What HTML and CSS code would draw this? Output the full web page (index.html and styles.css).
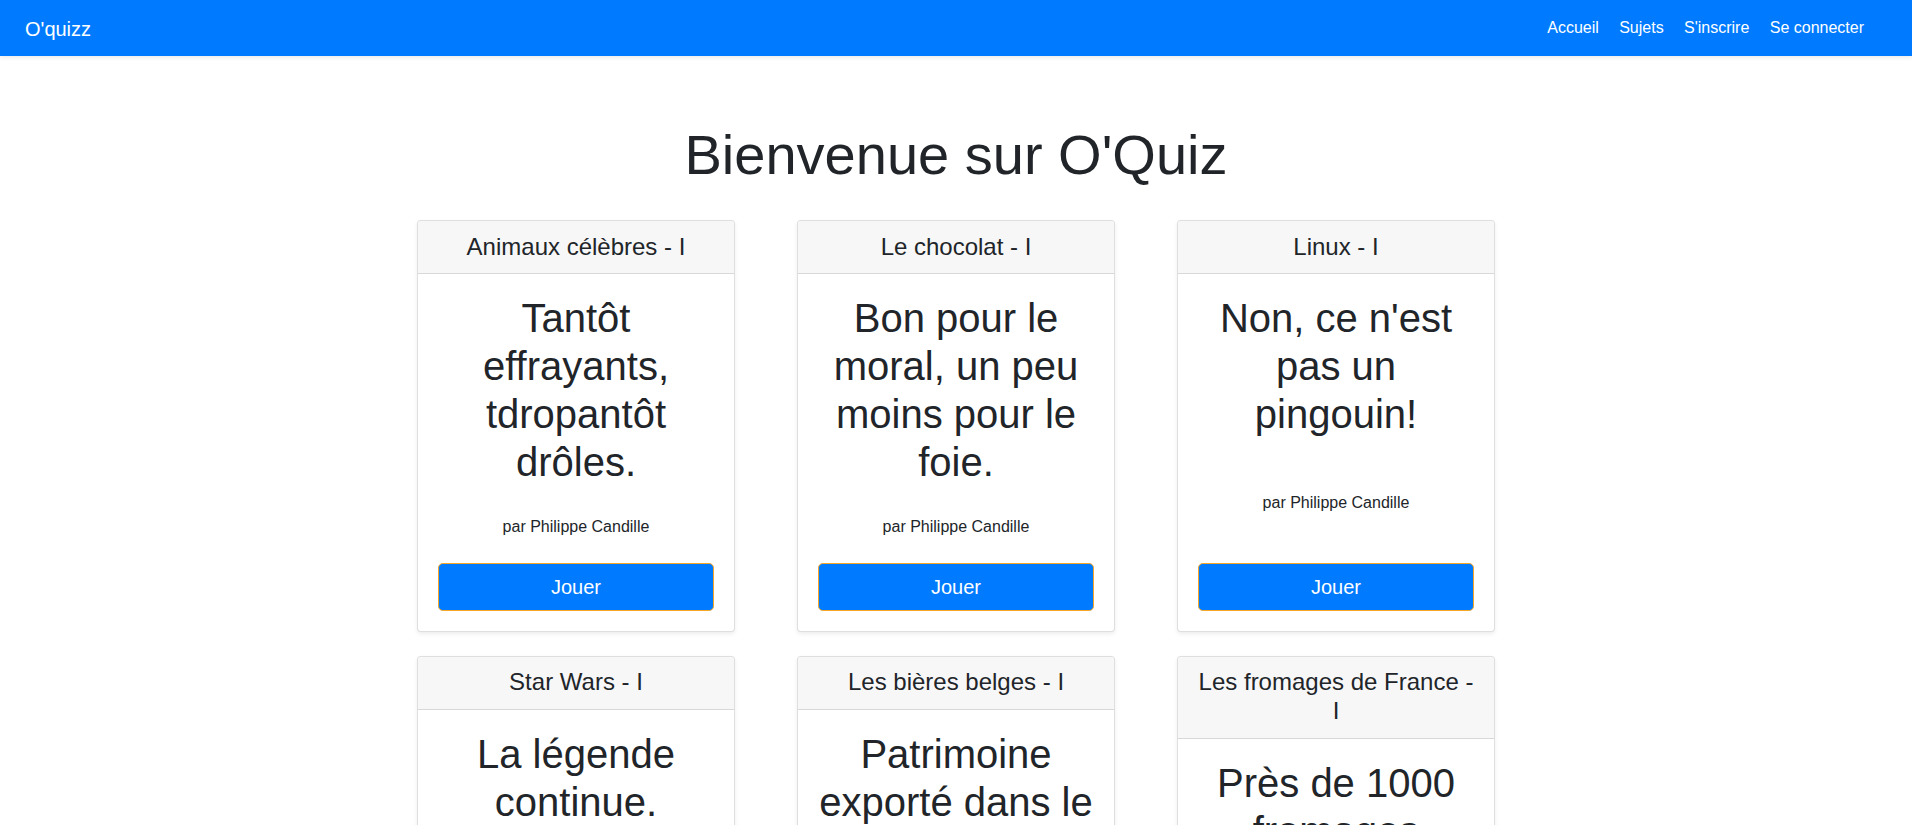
FILE: index.html
```html
<!DOCTYPE html>
<html lang="fr">
<head>
<meta charset="utf-8">
<title>O'quizz</title>
<link rel="stylesheet" href="styles.css">
</head>
<body>
<nav class="navbar">
  <a class="brand" href="#">O'quizz</a>
  <ul class="nav-links">
    <li><a href="#">Accueil</a></li>
    <li><a href="#">Sujets</a></li>
    <li><a href="#">S'inscrire</a></li>
    <li><a href="#">Se connecter</a></li>
  </ul>
</nav>
<main class="main">
  <h1 class="title">Bienvenue sur O'Quiz</h1>
  <div class="grid">
    <div class="card">
      <div class="card-header"><h4>Animaux célèbres - I</h4></div>
      <div class="card-body">
        <h2 class="desc">Tantôt effrayants, tdropantôt drôles.</h2>
        <p class="author">par Philippe Candille</p>
        <a class="btn" href="#">Jouer</a>
      </div>
    </div>
    <div class="card">
      <div class="card-header"><h4>Le chocolat - I</h4></div>
      <div class="card-body">
        <h2 class="desc">Bon pour le moral, un peu moins pour le foie.</h2>
        <p class="author">par Philippe Candille</p>
        <a class="btn" href="#">Jouer</a>
      </div>
    </div>
    <div class="card">
      <div class="card-header"><h4>Linux - I</h4></div>
      <div class="card-body">
        <h2 class="desc">Non, ce n'est pas un pingouin!</h2>
        <p class="author">par Philippe Candille</p>
        <a class="btn" href="#">Jouer</a>
      </div>
    </div>
    <div class="card">
      <div class="card-header"><h4>Star Wars - I</h4></div>
      <div class="card-body">
        <h2 class="desc">La légende continue.</h2>
        <p class="author">par Philippe Candille</p>
        <a class="btn" href="#">Jouer</a>
      </div>
    </div>
    <div class="card">
      <div class="card-header"><h4>Les bières belges - I</h4></div>
      <div class="card-body">
        <h2 class="desc">Patrimoine exporté dans le monde entier.</h2>
        <p class="author">par Philippe Candille</p>
        <a class="btn" href="#">Jouer</a>
      </div>
    </div>
    <div class="card">
      <div class="card-header"><h4>Les fromages de France - I</h4></div>
      <div class="card-body">
        <h2 class="desc">Près de 1000 fromages différents.</h2>
        <p class="author">par Philippe Candille</p>
        <a class="btn" href="#">Jouer</a>
      </div>
    </div>
  </div>
</main>
</body>
</html>
```

FILE: styles.css
```css
* { box-sizing: border-box; }

html, body {
  margin: 0;
  padding: 0;
}

body {
  font-family: "Liberation Sans", Arial, sans-serif;
  font-size: 16px;
  line-height: 1.5;
  color: #212529;
  background: #fff;
}

a { text-decoration: none; }

.navbar {
  display: flex;
  align-items: center;
  justify-content: space-between;
  height: 56px;
  padding: 0 48px 0 25px;
  background: #007bff;
  box-shadow: 0 2px 4px rgba(0, 0, 0, 0.08);
  position: relative;
}

.brand {
  color: #fff;
  font-size: 20px;
  line-height: 30px;
  padding-top: 1px;
}

.nav-links {
  display: flex;
  gap: 20.4px;
  list-style: none;
  margin: 0;
  padding: 0;
}

.nav-links a {
  color: #fff;
  font-size: 16px;
  line-height: 24px;
}

.main {
  padding: 65px 0 40px;
}

.title {
  margin: 0 0 32px;
  text-align: center;
  font-size: 56px;
  font-weight: 400;
  line-height: 1.2;
}

.grid {
  display: grid;
  grid-template-columns: repeat(3, 318px);
  column-gap: 62px;
  row-gap: 24px;
  justify-content: center;
}

.card {
  display: flex;
  flex-direction: column;
  border: 1px solid rgba(0, 0, 0, 0.125);
  border-radius: 4px;
  box-shadow: 0 2px 4px rgba(0, 0, 0, 0.075);
  background: #fff;
  overflow: hidden;
}

.card-header {
  padding: 11.5px 20px;
  background: #f7f7f7;
  border-bottom: 1px solid rgba(0, 0, 0, 0.125);
  text-align: center;
}

.card-header h4 {
  margin: 0;
  font-size: 24px;
  font-weight: 400;
  line-height: 1.2;
}

.card-body {
  flex: 1;
  display: flex;
  flex-direction: column;
  justify-content: space-between;
  padding: 20px;
  text-align: center;
}

.desc {
  margin: 0 0 29px;
  font-size: 40px;
  font-weight: 400;
  line-height: 1.2;
}

.author {
  margin: 0 0 24px;
  font-size: 16px;
  line-height: 24px;
}

.btn {
  display: block;
  padding: 8px 16px;
  font-size: 20px;
  line-height: 30px;
  color: #fff;
  text-align: center;
  background: #007bff;
  border: 1px solid #f5a623;
  border-radius: 4.8px;
}
```
